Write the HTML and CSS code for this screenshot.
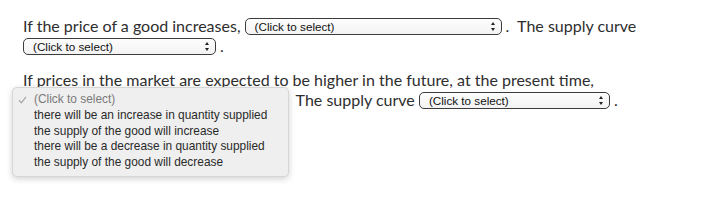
FILE: index.html
```html
<!DOCTYPE html>
<html lang="en">
<head>
  <meta charset="UTF-8">
  <title>Supply Question</title>
  <link rel="stylesheet" href="styles.css">
</head>
<body>
  <div class="question">
    <p>
      If the price of a good increases,
      <span class="select w-257">(Click to select)<span class="arrows"></span></span>.&nbsp; The supply curve
      <span class="select w-193">(Click to select)<span class="arrows"></span></span>.
    </p>

    <p>
      If prices in the market are expected to be higher in the future, at the present time,
      <span class="select w-265">(Click to select)<span class="arrows"></span></span>
      The supply curve
      <span class="select w-191">(Click to select)<span class="arrows"></span></span>.
    </p>

    <!-- open dropdown of the first select in the second question -->
    <div class="menu">
      <div class="option selected">
        <svg class="check" width="9" height="8" viewBox="0 0 9 8"><path d="M1 4.3 L3.4 6.8 L8 0.8" fill="none" stroke="#a8a8a8" stroke-width="1.3"/></svg>
        (Click to select)
      </div>
      <div class="option">there will be an increase in quantity supplied</div>
      <div class="option">the supply of the good will increase</div>
      <div class="option">there will be a decrease in quantity supplied</div>
      <div class="option">the supply of the good will decrease</div>
    </div>
  </div>
</body>
</html>
```

FILE: styles.css
```css
html,
body {
  min-height: 220px;
}

body {
  margin: 0;
  background: #fff;
  color: #2e2e2e;
  font-family: 'Lato', sans-serif;
}

.question {
  position: relative;
  padding: 16px 0 0 23px;
  width: 660px;
}

.question p {
  margin: 0 0 14px;
  font-size: 16px;
  line-height: 20px;
}

.select {
  position: relative;
  display: inline-block;
  box-sizing: border-box;
  height: 17px;
  margin-right: 4px;
  padding-left: 9px;
  border: 1px solid #3c3c3c;
  border-radius: 5px;
  background: linear-gradient(#fdfdfd, #f3f3f3);
  color: #111;
  font-family: 'Liberation Sans', Arial, sans-serif;
  font-size: 11.7px;
  line-height: 15px;
  vertical-align: 1px;
  white-space: nowrap;
}

.w-257 { width: 257px; }
.w-193 { width: 193px; }
.w-265 { width: 265px; }
.w-191 { width: 191px; }

.arrows {
  position: absolute;
  right: 5px;
  top: 3px;
  width: 5px;
  height: 9px;
}

.arrows::before,
.arrows::after {
  content: '';
  position: absolute;
  left: 0;
  border-left: 2.5px solid transparent;
  border-right: 2.5px solid transparent;
}

.arrows::before {
  top: 0;
  border-bottom: 3.5px solid #222;
}

.arrows::after {
  bottom: 0;
  border-top: 3.5px solid #222;
}

.menu {
  position: absolute;
  left: 12px;
  top: 87px;
  width: 277px;
  box-sizing: border-box;
  padding: 4px 0 5px;
  background: #efefef;
  border: 1px solid #d6d6d6;
  border-radius: 5px;
  box-shadow: 0 2px 6px rgba(0, 0, 0, 0.18);
}

.option {
  position: relative;
  padding-left: 21px;
  color: #2a2a2a;
  font-family: 'Liberation Sans', Arial, sans-serif;
  font-size: 11.9px;
  line-height: 15.8px;
  white-space: nowrap;
}

.option.selected {
  color: #7a7a7a;
}

.check {
  position: absolute;
  left: 5px;
  top: 4px;
}
```
